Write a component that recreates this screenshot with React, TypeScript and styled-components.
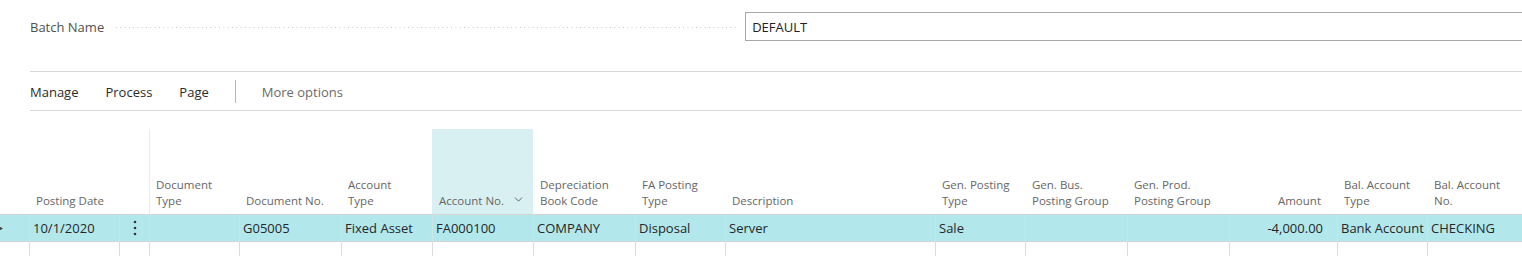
import React from "react";
import styled, { createGlobalStyle } from "styled-components";
import { ChevronDown } from "lucide-react";

const GlobalStyle = createGlobalStyle`
  html, body { margin: 0; padding: 0; background: #ffffff; }
  body { font-family: "Open Sans", "Noto Sans", sans-serif; color: #212121; overflow: hidden; }
  * { box-sizing: border-box; }
`;

const Page = styled.div`
  width: 1522px;
  height: 256px;
  overflow: hidden;
  display: flex;
  flex-direction: column;
  & > * { flex-shrink: 0; }
`;

const FieldRow = styled.div`
  display: flex;
  align-items: center;
  height: 29px;
  margin-top: 12px;
  padding-left: 30px;
`;

const FieldLabel = styled.span`
  font-size: 13px;
  color: #505050;
  white-space: nowrap;
`;

const Leader = styled.span`
  width: 623px;
  height: 1px;
  margin: 2px 6px 0 12px;
  background-image: linear-gradient(to right, #c4c4c4 1px, transparent 1px);
  background-size: 4.3px 1px;
  background-repeat: repeat-x;
`;

const FieldInput = styled.div`
  flex: 1;
  height: 29px;
  border: 1px solid #a8a8a8;
  border-right: none;
  display: flex;
  align-items: center;
  padding-left: 6px;
  font-size: 13px;
  color: #212121;
`;

const Toolbar = styled.div`
  margin: 30px 0 0 30px;
  height: 40px;
  border-top: 1px solid #d8d8d8;
  border-bottom: 1px solid #d8d8d8;
  display: flex;
  align-items: center;
  padding-top: 1px;
`;

const ToolItem = styled.span<{ $muted?: boolean; $gap: number }>`
  font-size: 13px;
  color: ${(p) => (p.$muted ? "#6b6b6b" : "#2b2b2b")};
  margin-right: ${(p) => p.$gap}px;
  white-space: nowrap;
`;

const ToolDivider = styled.span`
  width: 1px;
  height: 23px;
  background: #b8b8b8;
  margin-right: 26px;
`;

const Grid = styled.div`
  margin-top: 18px;
  display: grid;
  grid-template-columns: 29px 90px 30px 90px 102px 91px 101px 102px 90px 210px 90px 102px 102px 108px 90px 1fr;
  grid-template-rows: 85px 28px 27px;
`;

const HeadCell = styled.div<{ $right?: boolean; $active?: boolean; $divider?: boolean }>`
  display: flex;
  align-items: flex-end;
  justify-content: ${(p) => (p.$right ? "flex-end" : "space-between")};
  padding: 0 ${(p) => (p.$right ? "16px" : "6px")} 5px 6px;
  font-size: 11.5px;
  line-height: 16px;
  color: #666666;
  background: ${(p) => (p.$active ? "#d9f0f2" : "transparent")};
  border-left: 1px solid ${(p) => (p.$divider ? "#ececec" : "transparent")};
  text-align: ${(p) => (p.$right ? "right" : "left")};
`;

const Chevron = styled.span`
  display: flex;
  color: #444;
  margin-bottom: 3px;
  margin-right: 2px;
`;

const DataCell = styled.div<{ $first?: boolean; $right?: boolean; $selected?: boolean }>`
  display: flex;
  align-items: center;
  justify-content: ${(p) => (p.$right ? "flex-end" : "flex-start")};
  padding: 0 ${(p) => (p.$right ? "14px" : "2px")} 0 3px;
  font-size: 13px;
  color: #262626;
  white-space: nowrap;
  overflow: hidden;
  background: ${(p) => (p.$selected ? "#b2e8ec" : "#ffffff")};
  border-left: ${(p) => (p.$first ? "none" : p.$selected ? "1px solid #cfe3e5" : "1px solid #dcdcdc")};
  border-top: ${(p) => (p.$selected ? "1px solid #d4d4d4" : "none")};
  border-bottom: ${(p) => (p.$selected ? "1px solid #d4d4d4" : "none")};
`;

const MenuCell = styled(DataCell)`
  justify-content: center;
  padding: 0;
`;

const Indicator = styled.svg`
  display: block;
  margin-left: -3px;
`;

type Col = { head: string[]; right?: boolean; active?: boolean; divider?: boolean; value?: string };

const cols: Col[] = [
  { head: ["Posting Date"], value: "10/1/2020" },
  { head: [], value: "" },
  { head: ["Document", "Type"], divider: true, value: "" },
  { head: ["Document No."], value: "G05005" },
  { head: ["Account", "Type"], value: "Fixed Asset" },
  { head: ["Account No."], active: true, value: "FA000100" },
  { head: ["Depreciation", "Book Code"], value: "COMPANY" },
  { head: ["FA Posting", "Type"], value: "Disposal" },
  { head: ["Description"], value: "Server" },
  { head: ["Gen. Posting", "Type"], value: "Sale" },
  { head: ["Gen. Bus.", "Posting Group"], value: "" },
  { head: ["Gen. Prod.", "Posting Group"], value: "" },
  { head: ["Amount"], right: true, value: "-4,000.00" },
  { head: ["Bal. Account", "Type"], value: "Bank Account" },
  { head: ["Bal. Account", "No."], value: "CHECKING" },
];

const VerticalDots = () => (
  <svg width="4" height="16" viewBox="0 0 4 16">
    <circle cx="2" cy="2" r="1.3" fill="#333" />
    <circle cx="2" cy="8" r="1.3" fill="#333" />
    <circle cx="2" cy="14" r="1.3" fill="#333" />
  </svg>
);

export default function App() {
  return (
    <Page>
      <GlobalStyle />
      <FieldRow>
        <FieldLabel>Batch Name</FieldLabel>
        <Leader />
        <FieldInput>DEFAULT</FieldInput>
      </FieldRow>
      <Toolbar>
        <ToolItem $gap={27}>Manage</ToolItem>
        <ToolItem $gap={27}>Process</ToolItem>
        <ToolItem $gap={26}>Page</ToolItem>
        <ToolDivider />
        <ToolItem $muted $gap={0}>More options</ToolItem>
      </Toolbar>
      <Grid>
        <HeadCell />
        {cols.map((c, i) => (
          <HeadCell key={`h${i}`} $right={c.right} $active={c.active} $divider={c.divider}>
            <span>
              {c.head.map((line, j) => (
                <div key={j}>{line}</div>
              ))}
            </span>
            {c.active && (
              <Chevron>
                <ChevronDown size={13} strokeWidth={1.5} />
              </Chevron>
            )}
          </HeadCell>
        ))}

        <DataCell $first $selected>
          <Indicator width="3" height="7" viewBox="0 0 6 7">
            <path d="M0 0 L6 3.5 L0 7 Z" fill="#444" />
          </Indicator>
        </DataCell>
        {cols.map((c, i) =>
          i === 1 ? (
            <MenuCell key={`d${i}`} $selected>
              <VerticalDots />
            </MenuCell>
          ) : (
            <DataCell key={`d${i}`} $selected $right={c.right}>
              {c.value}
            </DataCell>
          )
        )}

        <DataCell $first />
        {cols.map((c, i) => (
          <DataCell key={`e${i}`} $right={c.right} />
        ))}
      </Grid>
    </Page>
  );
}
